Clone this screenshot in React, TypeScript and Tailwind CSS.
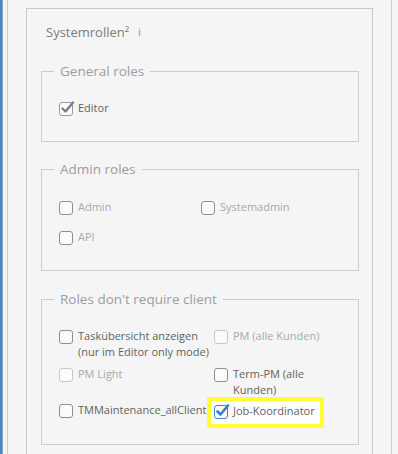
import React from "react";

type Box = "off" | "off-dim" | "on-dim" | "on-blue";

function CheckBox({ state }: { state: Box }) {
  const border =
    state === "off" ? "#8e8e8e" : state === "off-dim" ? "#c6c6c6" : state === "on-dim" ? "#9a9a9a" : "#3c86d6";
  return (
    <svg width="16" height="16" viewBox="0 0 16 16" className="mt-[1px] shrink-0 overflow-visible">
      <rect x="0.5" y="1.5" width="13" height="13" rx="2.5" fill="#fbfbfb" stroke={border} strokeWidth="1" />
      {state === "on-dim" && (
        <path d="M3.5 7.5 L6.5 10.5 L14 1.5" fill="none" stroke="#7d7d7d" strokeWidth="2.4" strokeLinecap="round" strokeLinejoin="round" />
      )}
      {state === "on-blue" && (
        <path d="M3.5 7.5 L6.5 10.5 L14 1.5" fill="none" stroke="#2f7fd6" strokeWidth="2.6" strokeLinecap="round" strokeLinejoin="round" />
      )}
    </svg>
  );
}

function Item({ label, state, dim }: { label: React.ReactNode; state: Box; dim?: boolean }) {
  return (
    <label className="flex items-start">
      <CheckBox state={state} />
      <span className={`pl-[3px] text-[11px] leading-[16px] ${dim ? "text-[#a8a8a8]" : "text-[#626262]"}`}>{label}</span>
    </label>
  );
}

function Group({ title, className, children }: { title: string; className?: string; children: React.ReactNode }) {
  return (
    <fieldset className={`w-[318px] border border-[#cccccc] ${className ?? ""}`}>
      <legend className="ml-[12px] px-[6px] text-[13.5px] leading-[18px] text-[#9c9c9c]">{title}</legend>
      {children}
    </fieldset>
  );
}

export default function App() {
  return (
    <div className="flex h-[454px] w-[398px] overflow-hidden bg-[#f5f5f5] font-['Open_Sans',sans-serif]">
      <div className="w-[2px] shrink-0 bg-[#3f87d8]" />
      <div className="w-[1px] shrink-0 bg-[#9aa4ae]" />
      <div className="ml-[4px] w-[385px] shrink-0 border-x border-[#cfcfcf] pl-[18px] pt-[8px]">
        <div className="w-[347px] border border-[#c8c8c8] px-[14px] pb-[40px]">
          <div className="mt-[13px] flex items-center pl-[5px] text-[13px] leading-[20px] text-[#7c7c7c]">
            <span>Systemrollen²</span>
            <span className="ml-[9px] text-[10px] text-[#888]">i</span>
          </div>

          <Group title="General roles" className="mt-[20px]">
            <div className="px-[17px] pb-[24px] pt-[20px]">
              <Item label="Editor" state="on-dim" />
            </div>
          </Group>

          <Group title="Admin roles" className="mt-[18px]">
            <div className="grid grid-cols-[142px_130px] gap-y-[13px] px-[17px] pb-[24px] pt-[21px]">
              <Item label="Admin" state="off" dim />
              <Item label="Systemadmin" state="off" dim />
              <Item label="API" state="off" dim />
            </div>
          </Group>

          <Group title="Roles don't require client" className="mt-[19px]">
            <div className="grid grid-cols-[155px_125px] items-start gap-y-[6px] px-[17px] pb-[16px] pt-[20px]">
              <Item label="Taskübersicht anzeigen (nur im Editor only mode)" state="off" />
              <Item label="PM (alle Kunden)" state="off-dim" dim />
              <Item label="PM Light" state="off-dim" dim />
              <Item label="Term-PM (alle Kunden)" state="off" />
              <div className="mt-[-2px]">
                <Item label="TMMaintenance_allClients" state="off" />
              </div>
              <div className="relative z-10 -ml-[7px] -mt-[7px] justify-self-start whitespace-nowrap border-[4px] border-[#ffff33] bg-white px-[3px] pb-[4px] pt-[2px] pr-[5px]">
                <Item label="Job-Koordinator" state="on-blue" />
              </div>
            </div>
          </Group>
        </div>
      </div>
    </div>
  );
}
